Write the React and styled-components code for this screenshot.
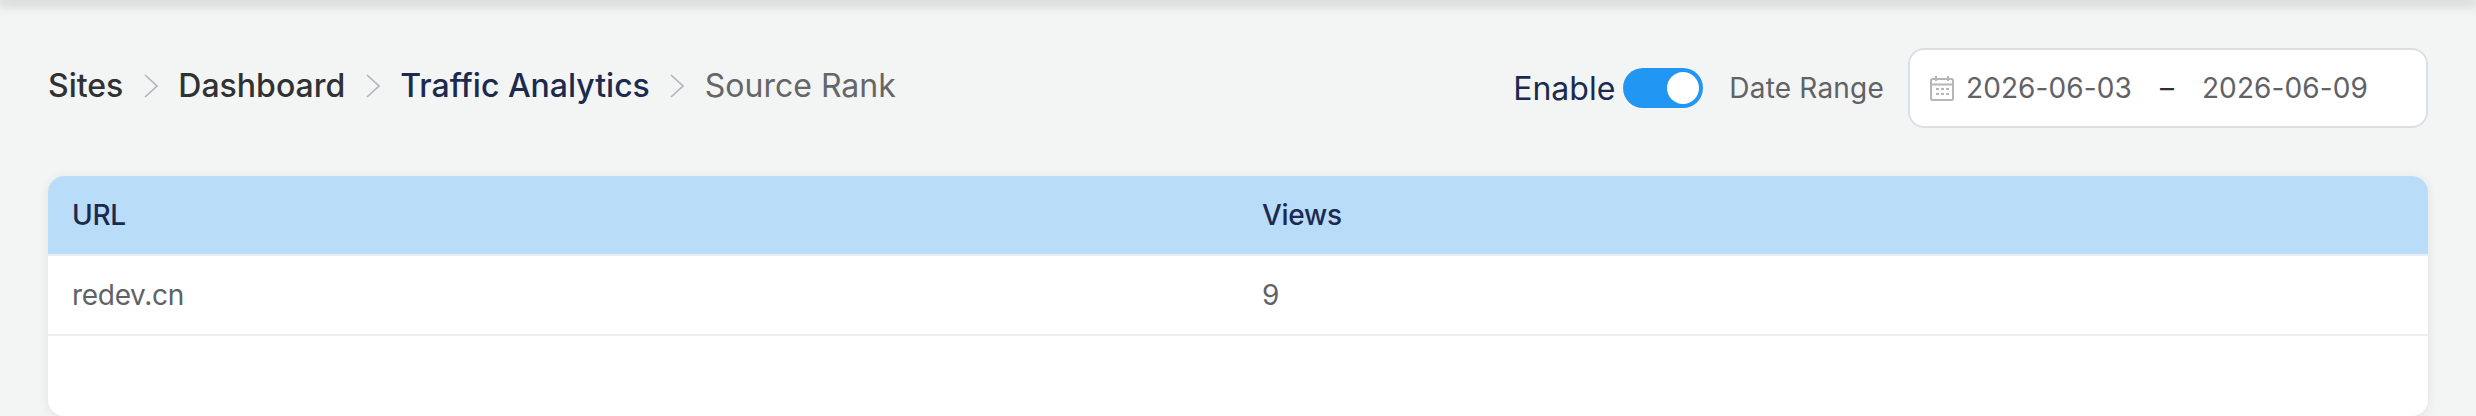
import React from 'react'
import styled, { createGlobalStyle } from 'styled-components'

const GlobalStyle = createGlobalStyle`
  html, body {
    margin: 0;
    padding: 0;
    background: #f3f5f5;
    font-family: Inter, "Noto Sans", sans-serif;
    overflow: hidden;
  }
`

const Page = styled.div`
  width: 2476px;
  height: 416px;
  overflow: hidden;
  box-sizing: border-box;
`

const TopShadow = styled.div`
  height: 0;
  box-shadow: 0 0 14px 3px rgba(0, 0, 0, 0.26);
`

const Content = styled.div`
  padding: 48px 48px 0;
  display: flex;
  flex-direction: column;
  gap: 48px;
`

const Toolbar = styled.div`
  display: flex;
  align-items: center;
  justify-content: space-between;
  height: 80px;
`

const Breadcrumb = styled.nav`
  display: flex;
  align-items: center;
  gap: 20.5px;
  margin-top: -5px;
`

const Crumb = styled.span`
  font-size: 32px;
  font-weight: ${(p) => (p.$current ? 400 : 500)};
  color: ${(p) => p.$color};
  line-height: 40px;
`

const Controls = styled.div`
  display: flex;
  align-items: center;
`

const EnableLabel = styled.span`
  font-size: 32px;
  font-weight: 400;
  color: #1b2a4e;
  margin-right: 8px;
`

const Toggle = styled.div`
  width: 80px;
  height: 40px;
  border-radius: 20px;
  background: #2196f3;
  display: flex;
  align-items: center;
  justify-content: flex-end;
  padding-right: 4px;
  box-sizing: border-box;
  margin-right: 26px;
`

const Knob = styled.div`
  width: 32px;
  height: 32px;
  border-radius: 50%;
  background: #fff;
`

const DateLabel = styled.span`
  font-size: 28px;
  letter-spacing: 0.2px;
  color: #606266;
  margin-right: 24px;
`

const DateInput = styled.div`
  width: 520px;
  height: 80px;
  box-sizing: border-box;
  background: #fff;
  border: 2px solid #dcdfe6;
  border-radius: 16px;
  display: flex;
  align-items: center;
  padding-left: 20px;
  font-size: 28px;
  color: #606266;
`

const DateValue = styled.span`
  letter-spacing: 0.1px;
`

const DateSeparator = styled.span`
  color: #303133;
  width: 70px;
  text-align: center;
`

const IconSlot = styled.span`
  display: flex;
  margin-right: 12px;
`

const Table = styled.div`
  background: #fff;
  border-radius: 16px;
  overflow: hidden;
  box-shadow: 0 2px 12px rgba(0, 0, 0, 0.08);
  height: 240px;
`

const Row = styled.div`
  display: grid;
  grid-template-columns: 1fr 1fr;
  height: 80px;
  box-sizing: border-box;
  background: ${(p) => (p.$head ? '#b9dcf8' : '#fff')};
  border-bottom: 2px solid ${(p) => (p.$head ? '#e6edf3' : '#ebeef2')};
`

const Cell = styled.div`
  display: flex;
  align-items: center;
  padding-left: 24px;
  font-size: 28px;
  letter-spacing: -0.3px;
  font-weight: ${(p) => (p.$head ? 500 : 400)};
  color: ${(p) => (p.$head ? '#1b2a4e' : '#606266')};
`

const Chevron = () => (
  <svg width="14" height="24" viewBox="0 0 14 24" fill="none">
    <path d="M1 1l12 11L1 23" stroke="#b1b3b8" strokeWidth="1.6" />
  </svg>
)

const CalendarIcon = () => (
  <svg width="24" height="25" viewBox="0 0 24 25" fill="none">
    <rect x="1" y="3" width="22" height="21" rx="1.5" stroke="#b4b6bb" strokeWidth="2" />
    <path d="M1 8.5h22M6 0v5M18 0v5" stroke="#b4b6bb" strokeWidth="2" />
    <path d="M6 13h3M11 13h3M16 13h3M6 18h3M11 18h3M16 18h3" stroke="#b4b6bb" strokeWidth="2" />
  </svg>
)

export default function App() {
  return (
    <Page>
      <GlobalStyle />
      <TopShadow />
      <Content>
        <Toolbar>
          <Breadcrumb>
            <Crumb $color="#303133">Sites</Crumb>
            <Chevron />
            <Crumb $color="#303133">Dashboard</Crumb>
            <Chevron />
            <Crumb $color="#1b2a4e">Traffic Analytics</Crumb>
            <Chevron />
            <Crumb $current $color="#666">Source Rank</Crumb>
          </Breadcrumb>
          <Controls>
            <EnableLabel>Enable</EnableLabel>
            <Toggle>
              <Knob />
            </Toggle>
            <DateLabel>Date Range</DateLabel>
            <DateInput>
              <IconSlot>
                <CalendarIcon />
              </IconSlot>
              <DateValue>2026-06-03</DateValue>
              <DateSeparator>–</DateSeparator>
              <DateValue>2026-06-09</DateValue>
            </DateInput>
          </Controls>
        </Toolbar>
        <Table>
          <Row $head>
            <Cell $head>URL</Cell>
            <Cell $head>Views</Cell>
          </Row>
          <Row>
            <Cell>redev.cn</Cell>
            <Cell>9</Cell>
          </Row>
        </Table>
      </Content>
    </Page>
  )
}
